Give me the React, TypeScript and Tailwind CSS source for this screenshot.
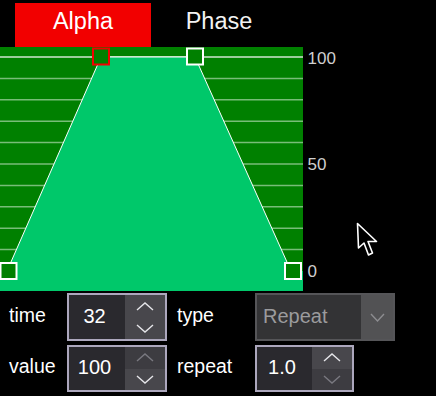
import React from "react";

const GRID = Array.from({ length: 10 }, (_, i) => 10 + i * 21.4);

function Chevron({ up, dim }: { up?: boolean; dim?: boolean }) {
  return (
    <svg width="18" height="9" viewBox="0 0 18 9" className="block">
      <path
        d={up ? "M1 8 L9 1 L17 8" : "M1 1 L9 8 L17 1"}
        fill="none"
        stroke={dim ? "#7a7980" : "#e6e6ea"}
        strokeWidth="1.4"
      />
    </svg>
  );
}

function Spin({
  value,
  upDim,
  downDim,
  width,
  height,
}: {
  value: string;
  upDim?: boolean;
  downDim?: boolean;
  width: string;
  height: string;
}) {
  return (
    <div className={`flex border-2 border-[#aca7bd] ${width} ${height}`}>
      <div className="flex flex-1 items-center justify-center bg-[#2a292e] pr-[5px] pb-[3px] text-[20px] text-white">
        {value}
      </div>
      <div className="flex w-[40px] flex-col">
        <div
          className={`flex flex-1 items-center justify-center ${upDim ? "bg-[#3d3c41]" : "bg-[#48474c]"}`}
        >
          <Chevron up dim={upDim} />
        </div>
        <div
          className={`flex flex-1 items-center justify-center ${downDim ? "bg-[#3d3c41]" : "bg-[#48474c]"}`}
        >
          <Chevron dim={downDim} />
        </div>
      </div>
    </div>
  );
}

function Chart() {
  return (
    <svg width="303" height="244" viewBox="0 0 303 244" className="block">
      <rect x="0" y="0" width="303" height="244" fill="#008000" />
      {GRID.map((y, i) => (
        <line
          key={i}
          x1="0"
          x2="303"
          y1={y}
          y2={y}
          stroke={i === 0 ? "#d2e6d2" : "#78bd78"}
          strokeWidth="1.5"
        />
      ))}
      <polygon
        points="0,244 0,224 7,224 101,10 195,10 291,224 303,224 303,244"
        fill="#00c86a"
      />
      <polyline
        points="7,224 101,10 195,10 291,224"
        fill="none"
        stroke="#ffffff"
        strokeWidth="1"
      />
      <rect x="93" y="1.5" width="16" height="16" fill="#008000" stroke="#f20000" strokeWidth="2" />
      <rect x="187" y="1.5" width="16" height="16" fill="#008000" stroke="#ffffff" strokeWidth="2" />
      <rect x="0.5" y="216" width="16" height="16" fill="#008000" stroke="#ffffff" strokeWidth="2" />
      <rect x="285" y="216" width="16" height="16" fill="#008000" stroke="#ffffff" strokeWidth="2" />
    </svg>
  );
}

export default function App() {
  return (
    <div className="relative h-[396px] w-[436px] overflow-hidden bg-black font-['Liberation_Sans',Arial,sans-serif] text-white">
      {/* tabs */}
      <div className="flex pt-[3px] pl-[15px]">
        <div className="h-[44px] w-[136px] bg-[#f20000] pt-[4px] text-center text-[23.5px] leading-[28px]">
          Alpha
        </div>
        <div className="h-[44px] w-[136px] pt-[4px] text-center text-[23.5px] leading-[28px] text-[#f2f2f2]">
          Phase
        </div>
      </div>

      {/* chart + axis */}
      <div className="flex">
        <Chart />
        <div className="flex flex-col gap-[86.8px] pt-[1.7px] pl-[4.5px] text-[17px] leading-[20px] text-[#cfcfcf]">
          <span>100</span>
          <span>50</span>
          <span>0</span>
        </div>
      </div>

      {/* controls */}
      <div className="mt-[2px] grid grid-cols-[67px_100px_88px_auto] grid-rows-[48px_47px] gap-y-[4px] text-[19.5px]">
        <div className="flex items-center pb-[3px] pl-[9px]">time</div>
        <Spin value="32" width="w-[100px]" height="h-[48px]" />
        <div className="flex items-center pb-[3px] pl-[10px]">type</div>
        <div className="flex h-[48px] w-[140px] border-2 border-[#555558] bg-[#333335]">
          <div className="flex flex-1 items-center pb-[3px] pl-[6px] text-[20px] text-[#9b9b9d]">
            Repeat
          </div>
          <div className="flex w-[32px] items-center justify-center bg-[#525254]">
            <svg width="15" height="9" viewBox="0 0 15 9" className="block">
              <path d="M1 1 L7.5 8 L14 1" fill="none" stroke="#8d8d90" strokeWidth="1.4" />
            </svg>
          </div>
        </div>

        <div className="flex items-center pb-[3px] pl-[9px]">value</div>
        <Spin value="100" upDim width="w-[100px]" height="h-[47px]" />
        <div className="flex items-center pb-[3px] pl-[10px]">repeat</div>
        <Spin value="1.0" downDim width="w-[99px]" height="h-[47px]" />
      </div>

      {/* mouse pointer */}
      <svg
        width="24"
        height="36"
        viewBox="0 0 24 36"
        className="pointer-events-none absolute top-[222px] left-[356px]"
      >
        <path
          d="M1.5 1.5 L2.5 26 L8 21 L12.5 33 L16.5 31 L12 19.5 L20.5 19.5 Z"
          fill="#000"
          stroke="#fff"
          strokeWidth="1.6"
          strokeLinejoin="round"
        />
      </svg>
    </div>
  );
}
